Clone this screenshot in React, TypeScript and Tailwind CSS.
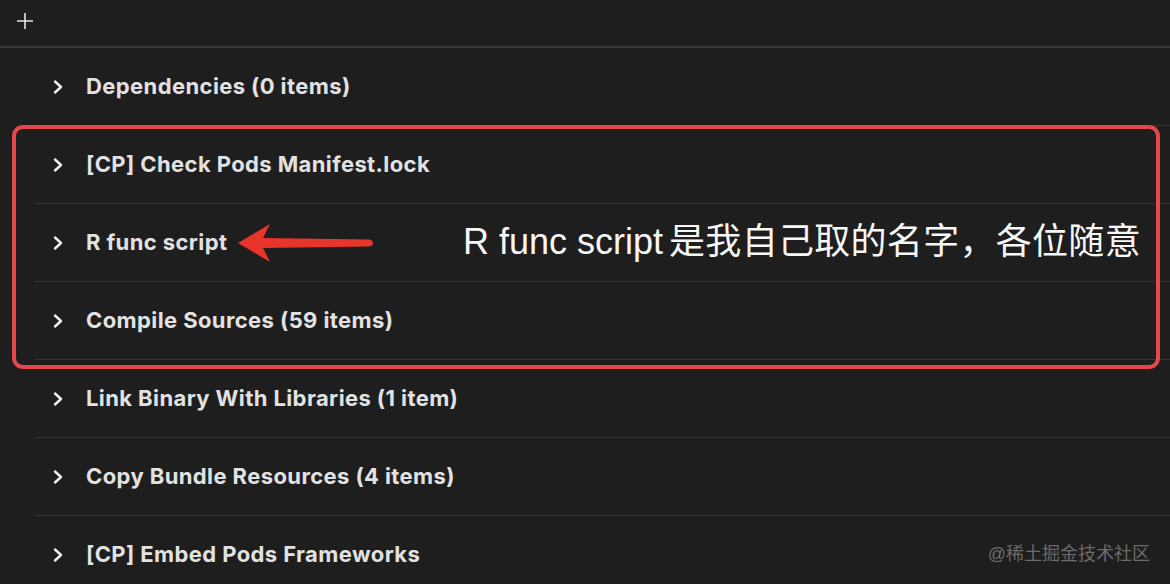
const rows = [
  "Dependencies (0 items)",
  "[CP] Check Pods Manifest.lock",
  "R func script",
  "Compile Sources (59 items)",
  "Link Binary With Libraries (1 item)",
  "Copy Bundle Resources (4 items)",
  "[CP] Embed Pods Frameworks",
];

function Chevron() {
  return (
    <svg viewBox="0 0 12 16" className="h-[16px] w-[12px]" aria-hidden="true">
      <path
        d="M3 2.5L9 8L3 13.5"
        fill="none"
        stroke="#f2f2f2"
        strokeWidth="2.4"
        strokeLinecap="round"
        strokeLinejoin="round"
      />
    </svg>
  );
}

function Arrow() {
  return (
    <svg
      viewBox="0 0 140 42"
      className="absolute left-[236px] top-[222px] h-[42px] w-[140px]"
      aria-hidden="true"
    >
      <path
        d="M2 21L34 2L27 16L133 17.5Q137 18 137 21Q137 24 133 24.5L27 26L34 40Z"
        fill="#e8352b"
      />
    </svg>
  );
}

export default function App() {
  return (
    <main
      className="relative h-[584px] w-[1170px] overflow-hidden bg-[#1e1e1e]"
      style={{ fontFamily: "Inter, 'Liberation Sans', sans-serif" }}
    >
      <div className="flex h-[48px] items-center border-b-2 border-[#383838] pb-[4px] pl-4">
        <svg viewBox="0 0 18 18" className="h-[18px] w-[18px]" aria-hidden="true">
          <path d="M9 1V17M1 9H17" stroke="#e6e6e6" strokeWidth="1.6" />
        </svg>
      </div>

      <ul className="pl-[35px]">
        {rows.map((label) => (
          <li
            key={label}
            className="flex h-[78px] items-center border-b border-[#343434]"
          >
            <div className="flex w-[51px] items-center pl-[17px]">
              <Chevron />
            </div>
            <span className="text-[22px] font-bold tracking-[0.4px] text-[#e2e2e2]">
              {label}
            </span>
          </li>
        ))}
      </ul>

      {/* annotation overlay */}
      <div className="absolute left-[12px] top-[125px] h-[244px] w-[1148px] rounded-[11px] border-4 border-[#e4474c]" />
      <Arrow />
      <p
        className="absolute left-[463px] top-[220px] text-[36px] leading-[44px] text-[#f7f7f7]"
        style={{ fontFamily: "'Liberation Sans', 'Noto Sans CJK SC', sans-serif" }}
      >
        R func script
        <span className="ml-[6px] tracking-[0.3px]">是我自己取的名字，各位随意</span>
      </p>
      <p
        className="absolute right-[20px] top-[542px] text-[18px] leading-[24px] text-[#6b6b6b]"
        style={{ fontFamily: "'Liberation Sans', 'Noto Sans CJK SC', sans-serif" }}
      >
        @稀土掘金技术社区
      </p>
    </main>
  );
}
